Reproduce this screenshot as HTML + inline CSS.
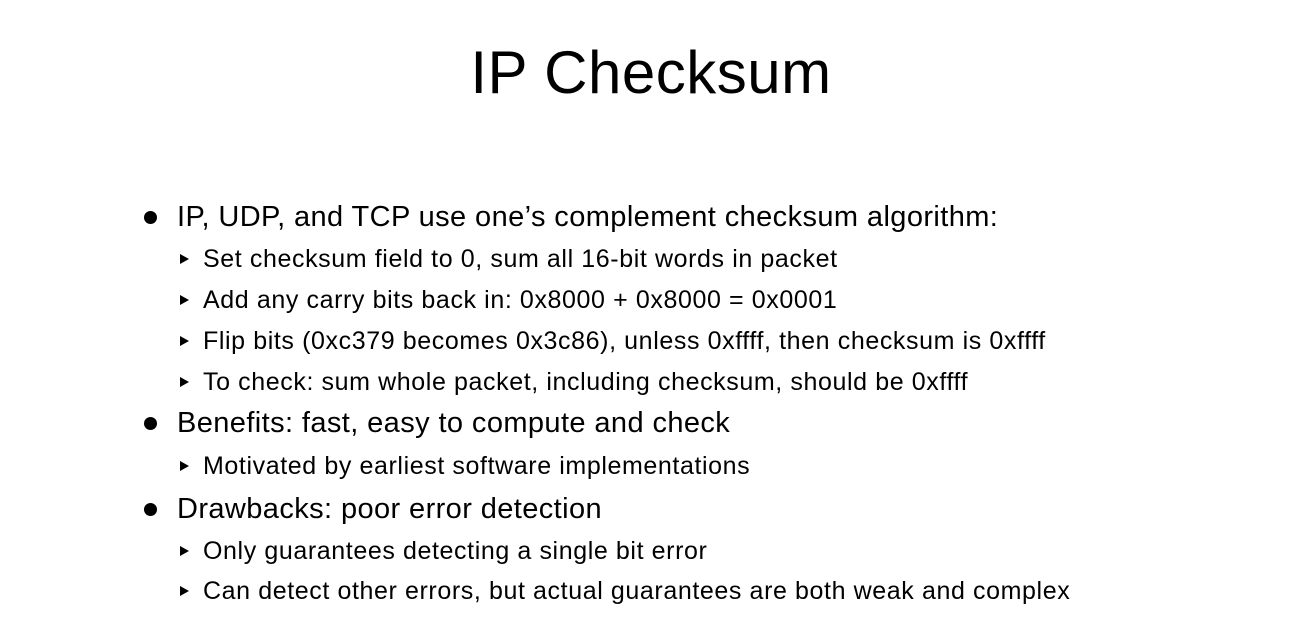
<!DOCTYPE html>
<html><head><style>
body{margin:0;width:1302px;height:642px;background:#fff;position:relative;overflow:hidden;font-family:"Liberation Sans",sans-serif;color:#000}
.t{position:absolute;left:0;width:1302px;text-align:center;top:38px;font-size:60px;line-height:70px;letter-spacing:0.5px}
.l{position:absolute;white-space:nowrap}
.a{left:177px;font-size:29px;line-height:34px;letter-spacing:0.4px}
.b{left:203px;font-size:25px;line-height:30px;letter-spacing:0.6px}
.d{position:absolute;left:144px;width:13px;height:13px;border-radius:50%;background:#000}
.tr{position:absolute;left:180px;width:0;height:0;border-left:9px solid #000;border-top:5px solid transparent;border-bottom:5px solid transparent}
</style></head><body>
<div class="t">IP Checksum</div>
<div class="d" style="top:211px"></div><div class="l a" style="top:200px">IP, UDP, and TCP use one’s complement checksum algorithm:</div>
<div class="tr" style="top:254px"></div><div class="l b" style="top:244px">Set checksum field to 0, sum all 16-bit words in packet</div>
<div class="tr" style="top:295px"></div><div class="l b" style="top:285px">Add any carry bits back in: 0x8000 + 0x8000 = 0x0001</div>
<div class="tr" style="top:336px"></div><div class="l b" style="top:326px">Flip bits (0xc379 becomes 0x3c86), unless 0xffff, then checksum is 0xffff</div>
<div class="tr" style="top:377px"></div><div class="l b" style="top:367px">To check: sum whole packet, including checksum, should be 0xffff</div>
<div class="d" style="top:417px"></div><div class="l a" style="top:406px">Benefits: fast, easy to compute and check</div>
<div class="tr" style="top:461px"></div><div class="l b" style="top:451px">Motivated by earliest software implementations</div>
<div class="d" style="top:503px"></div><div class="l a" style="top:492px">Drawbacks: poor error detection</div>
<div class="tr" style="top:546px"></div><div class="l b" style="top:536px">Only guarantees detecting a single bit error</div>
<div class="tr" style="top:586px"></div><div class="l b" style="top:576px">Can detect other errors, but actual guarantees are both weak and complex</div>
</body></html>
